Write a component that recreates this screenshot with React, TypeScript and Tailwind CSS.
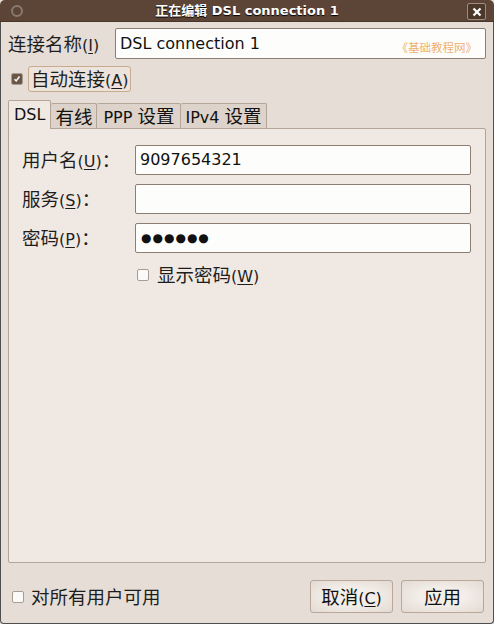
import React from 'react';

const font = "font-['DejaVu_Sans','Noto_Sans_CJK_SC',sans-serif]";

// CJK glyphs in the reference render a bit larger than the Latin text
const C: React.FC<{ children: React.ReactNode }> = ({ children }) => (
  <span className="text-[18.5px] font-['Noto_Sans_CJK_SC',sans-serif]">{children}</span>
);

const U: React.FC<{ children: React.ReactNode }> = ({ children }) => (
  <span className="underline underline-offset-2 decoration-1">{children}</span>
);

const Check: React.FC<{ checked?: boolean }> = ({ checked }) => (
  <div className="w-[12px] h-[12px] rounded-[2px] border border-[#a89c90] bg-[#fbfaf8] flex items-center justify-center shrink-0">
    {checked && (
      <div className="w-[10px] h-[10px] rounded-[1px] bg-[#6b5646] flex items-center justify-center">
        <svg width="8" height="8" viewBox="0 0 8 8">
          <path d="M1.5 4.2 L3.2 6 L6.5 1.5" stroke="#fff" strokeWidth="1.4" fill="none" />
        </svg>
      </div>
    )}
  </div>
);

const Field: React.FC<{ label: React.ReactNode; value?: React.ReactNode }> = ({ label, value }) => (
  <div className="flex items-center">
    <div className="w-[113px] text-[#1e1e1e]">{label}</div>
    <div className="w-[336px] h-[30px] rounded-[2px] border border-[#8c7e72] bg-[#fdfefc] flex items-center px-[4px] text-[#111]">
      {value}
    </div>
  </div>
);

const App: React.FC = () => {
  const tabs: { label: React.ReactNode; pad: string }[] = [
    { label: <C>有线</C>, pad: 'px-[4px]' },
    { label: <span>PPP <C>设置</C></span>, pad: 'px-[6px]' },
    { label: <span>IPv4 <C>设置</C></span>, pad: 'px-[4px]' },
  ];
  return (
    <div className={`w-[494px] h-[624px] flex flex-col ${font} text-[16px] leading-none bg-[#e5ddd6]`}>
      {/* title bar */}
      <div className="h-[22px] bg-[#5c4536] rounded-t-[5px] flex items-center relative border-b border-[#4a3629]">
        <div className="absolute left-[11px] top-[5px] w-[12px] h-[12px] rounded-full border-2 border-[#8a7a6c]" />
        <div className="flex-1 text-center text-white font-bold text-[13px] [text-shadow:0_1px_1px_#000]">
          正在编辑 DSL connection 1
        </div>
        <div className="absolute right-[8px] top-[3px] w-[19px] h-[17px] rounded-[2px] border border-[#a08c7c] bg-[#4c382b] flex items-center justify-center">
          <svg width="10" height="10" viewBox="0 0 10 10">
            <path d="M1.5 1.5 L8.5 8.5 M8.5 1.5 L1.5 8.5" stroke="#fff" strokeWidth="2.2" />
          </svg>
        </div>
      </div>

      {/* body */}
      <div className="flex-1 flex flex-col border-x border-b border-[#4e4e4e] rounded-b-[4px] px-[7px]">
        <div className="flex items-center mt-[6px]">
          <div className="w-[107px] text-[#1e1e1e]"><C>连接名称</C>(<U>I</U>)</div>
          <div className="flex-1 h-[31px] rounded-[2px] border border-[#8c7e72] bg-[#fdfefc] flex items-center pl-[4px] pr-[8px] text-[#111]">
            <span className="flex-1">DSL connection 1</span>
            <span className="text-[11.5px] text-[#f0b070] mt-[9px] font-['Noto_Sans_CJK_SC',sans-serif]">《基础教程网》</span>
          </div>
        </div>

        <div className="flex items-center mt-[7px] h-[26px]">
          <div className="ml-[3px] mr-[5px]"><Check checked /></div>
          <div className="h-[26px] px-[2px] flex items-center rounded-[3px] border border-[#c8ab8c] bg-[#ebe3dc] text-[#1e1e1e]">
            <span><C>自动连接</C>(<U>A</U>)</span>
          </div>
        </div>

        {/* tabs */}
        <div className="flex items-end mt-[8px] h-[28px]">
          <div className="h-[29px] px-[5px] flex items-center rounded-t-[2px] border border-b-0 border-[#b3a597] bg-[#f0e9e3] text-[#111] relative z-10 mb-[-1px]">
            DSL
          </div>
          {tabs.map((t, i) => (
            <div
              key={i}
              className={`h-[25px] ${t.pad} flex items-center rounded-t-[2px] border border-l-0 border-b-0 border-[#b3a597] bg-[#ddd3ca] text-[#111]`}
            >
              {t.label}
            </div>
          ))}
        </div>

        {/* notebook page */}
        <div className="h-[435px] border border-[#b3a597] rounded-[2px] bg-[#f0e9e3] pl-[13px] pt-[16px] flex flex-col gap-[9px]">
          <Field label={<span><C>用户名</C>(<U>U</U>)<C>：</C></span>} value="9097654321" />
          <Field label={<span><C>服务</C>(<U>S</U>)<C>：</C></span>} />
          <Field
            label={<span><C>密码</C>(<U>P</U>)<C>：</C></span>}
            value={<span className="text-[12px] tracking-[1px] ml-[1px]">●●●●●●</span>}
          />
          <div className="flex items-center ml-[115px] mt-[3px] gap-[8px]">
            <Check />
            <span className="text-[#1e1e1e]"><C>显示密码</C>(<U>W</U>)</span>
          </div>
        </div>

        {/* footer */}
        <div className="flex items-center mt-[17px]">
          <div className="ml-[4px] mr-[7px]"><Check /></div>
          <span className="flex-1 text-[#1e1e1e]"><C>对所有用户可用</C></span>
          <button className="w-[83px] h-[33px] rounded-[3px] border border-[#b7a898] bg-[radial-gradient(ellipse_at_center,#f3eee9_40%,#e3dad2_100%)] text-[#111]">
            <span><C>取消</C>(<U>C</U>)</span>
          </button>
          <button className="w-[83px] h-[33px] ml-[8px] mr-[2px] rounded-[3px] border border-[#b7a898] bg-[radial-gradient(ellipse_at_center,#f3eee9_40%,#e3dad2_100%)] text-[#111]">
            <C>应用</C>
          </button>
        </div>
      </div>
    </div>
  );
};

export default App;
